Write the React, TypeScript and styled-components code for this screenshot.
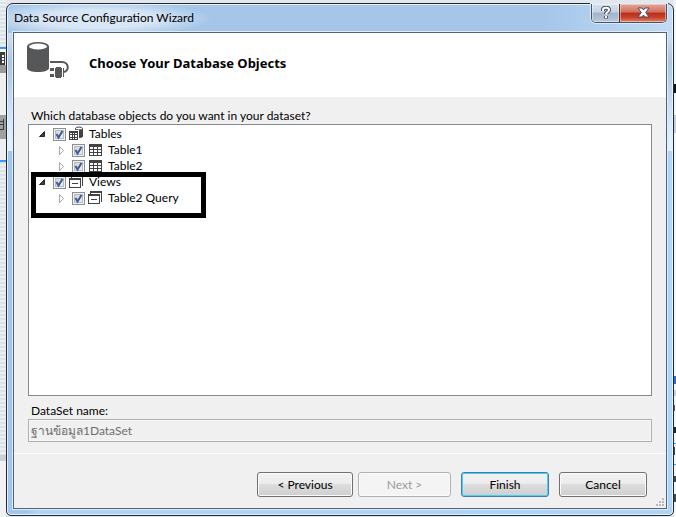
import React from "react";
import styled, { createGlobalStyle, css } from "styled-components";

const Global = createGlobalStyle`
  * { box-sizing: border-box; }
  body { margin: 0; font-family: Lato, "Open Sans", "Liberation Sans", sans-serif; font-size: 12px; line-height: 16px; color: #000; }
  button, input { font: inherit; margin: 0; }
  h1, h2, ul { margin: 0; padding: 0; }
  ul { list-style: none; }
`;

const Desktop = styled.div`
  min-height: 100vh;
  display: grid;
  grid-template-columns: 6px minmax(0, 1fr) 2px;
  grid-template-rows: 3px 1fr 1px;
  background: #e3e7ec;
`;

const LeftSliver = styled.div`
  grid-row: 1 / -1;
  background:
    linear-gradient(#3399ff, #3399ff) 0 47px / 6px 2px no-repeat,
    linear-gradient(#fff, #fff) 0 49px / 6px 3px no-repeat,
    linear-gradient(#fff, #fff) 2px 55px / 2px 2px no-repeat,
    linear-gradient(#fff, #fff) 2px 58px / 2px 2px no-repeat,
    linear-gradient(#fff, #fff) 2px 61px / 2px 2px no-repeat,
    linear-gradient(#3c3c3c, #3c3c3c) 0 52px / 5px 13px no-repeat,
    linear-gradient(#999, #999) 0 65px / 6px 8px no-repeat,
    linear-gradient(#efefef, #efefef) 0 73px / 6px 42px no-repeat,
    linear-gradient(#3c3c3c, #3c3c3c) 0 121px / 3px 1px no-repeat,
    linear-gradient(#3c3c3c, #3c3c3c) 0 124px / 4px 1px no-repeat,
    linear-gradient(#3c3c3c, #3c3c3c) 0 129px / 4px 1px no-repeat,
    linear-gradient(#3c3c3c, #3c3c3c) 3px 119px / 1px 11px no-repeat,
    linear-gradient(#a0a0a0, #a0a0a0) 0 115px / 6px 24px no-repeat,
    linear-gradient(#efefef, #efefef) 0 139px / 6px 21px no-repeat,
    linear-gradient(#3399ff, #3399ff) 0 160px / 6px 2px no-repeat,
    linear-gradient(#ccccdb, #ccccdb) 0 455px / 6px 6px no-repeat,
    linear-gradient(#f2f2f4, #f2f2f4) 0 461px / 6px 60px no-repeat,
    repeating-linear-gradient(#e9eef0 0 2px, #dbe1e4 2px 4px);
`;

const RightSliver = styled.div`
  grid-column: 3;
  grid-row: 1 / -1;
  background:
    linear-gradient(#111, #111) 0 84px / 2px 9px no-repeat,
    linear-gradient(#ccccdb, #ccccdb) 0 115px / 2px 18px no-repeat,
    linear-gradient(#2a6fd6, #2a6fd6) 0 376px / 2px 8px no-repeat,
    linear-gradient(#ccccdb, #ccccdb) 0 390px / 2px 6px no-repeat,
    linear-gradient(#7b5230, #7b5230) 0 405px / 1px 6px no-repeat,
    linear-gradient(#222, #222) 0 427px / 2px 6px no-repeat,
    linear-gradient(#3399ff, #3399ff) 0 443px / 2px 1px no-repeat,
    linear-gradient(#444, #444) 0 447px / 1px 8px no-repeat,
    linear-gradient(#3399ff, #3399ff) 0 464px / 2px 1px no-repeat,
    linear-gradient(#444, #444) 0 476px / 2px 6px no-repeat,
    linear-gradient(#444, #444) 0 494px / 2px 8px no-repeat,
    #f7f7fa;
`;

const Dialog = styled.main`
  grid-column: 2;
  grid-row: 2;
  display: flex;
  flex-direction: column;
  padding: 0 6px 6px;
  border: 1px solid #1f2a38;
  border-radius: 7px 7px 5px 5px;
  box-shadow: inset 0 0 0 1px #e6f2fd;
  background:
    radial-gradient(ellipse 115px 18px at 90px 15px, #d8e6f5 0 50%, transparent) 0 0 / 100% 29px no-repeat,
    linear-gradient(90deg, #a5c6e9 0 80%, #c3daf2) 0 0 / 100% 29px no-repeat,
    linear-gradient(#cfe0f2, #aec5de 30px, #d6e8fa 90px, #e4f2ff 118px) 0 29px / 100% 118px no-repeat,
    linear-gradient(90deg, #a3c6ec 0 20px, #b0d3f8 30px);
`;

const TitleBar = styled.header`
  display: flex;
  align-items: flex-start;
  justify-content: space-between;
  height: 28px;
`;

const Title = styled.h1`
  padding: 5px 1px 0;
  font-size: 12px;
  line-height: 18px;
  font-weight: 400;
`;

const Caption = styled.div`
  display: flex;
  border: 1px solid #465365;
  border-top: 0;
  border-radius: 0 0 5px 5px;
  overflow: hidden;
  box-shadow: 0 0 0 1px #dcebf9;
`;

const CaptionButton = styled.button<{ $close?: boolean }>`
  display: grid;
  place-items: center;
  height: 18px;
  padding: 0;
  border: 0;
  box-shadow: inset 0 0 0 1px #ffffff70;
  ${({ $close }) =>
    $close
      ? css`width: 47px; border-left: 1px solid #5b2020; background: linear-gradient(#e5a599, #d0705e 45%, #b52f1c 50%, #c8432c 75%, #e08469);`
      : css`width: 27px; background: linear-gradient(#d6e1ee, #c5d2e1 45%, #a3b3c7 50%, #b7c9dd);`}
`;

const Client = styled.div`
  flex: 1;
  display: flex;
  flex-direction: column;
  border: 1px solid #4f6276;
  box-shadow: 0 0 0 1px #dcecfb;
  background: #f0f0f0;
`;

const Banner = styled.div`
  display: flex;
  align-items: center;
  gap: 19px;
  height: 64px;
  padding: 0 12px;
  background: #fff;
`;

const Heading = styled.h2`
  padding-bottom: 4px;
  font-family: "Noto Sans", "Open Sans", sans-serif;
  font-size: 13px;
  line-height: 18px;
  font-weight: 700;
`;

const Body = styled.section`
  flex: 1;
  display: flex;
  flex-direction: column;
  padding: 10px 14px 11px;
`;

const FieldLabel = styled.label`
  padding: 0 3px;
  line-height: 17px;
`;

const TreeBox = styled.div`
  position: relative;
  flex: 1;
  margin-bottom: 6px;
  padding-top: 1px;
  border: 1px solid #828790;
  background: #fff;
`;

const Row = styled.div<{ $level: number }>`
  display: flex;
  align-items: center;
  height: 16px;
  padding-left: ${({ $level }) => 5 + $level * 19}px;
`;

const Expander = styled.button`
  display: grid;
  width: 16px;
  height: 16px;
  padding: 0;
  margin-right: 3px;
  border: 0;
  background: none;
`;

const NodeLabel = styled.label`
  display: flex;
  align-items: center;
  height: 16px;
`;

const CheckWrap = styled.span`
  display: grid;
  margin-right: 3px;
  > * { grid-area: 1 / 1; }
  svg { pointer-events: none; }
`;

const Check = styled.input`
  appearance: none;
  width: 13px;
  height: 13px;
  border: 1px solid #8e8f8f;
  box-shadow: inset 0 0 0 1px #f4f4f4, inset 0 0 0 2px #b4bac2;
  background: linear-gradient(135deg, #cbcfd5, #f6f6f6);
`;

const NodeText = styled.span`
  margin-left: 4px;
`;

const Highlight = styled.div`
  position: absolute;
  left: 2px;
  top: 47px;
  width: 175px;
  height: 46px;
  border: 5px solid #000;
  pointer-events: none;
`;

const NameInput = styled.input`
  width: 100%;
  height: 23px;
  padding: 0 2px;
  border: 1px solid #afafaf;
  box-shadow: inset 0 0 0 1px #f8f8f8;
  background: #f0f0f0;
  color: #6d6d6d;
`;

const Footer = styled.footer`
  position: relative;
  display: flex;
  justify-content: flex-end;
  height: 55px;
  padding: 18px 19px 0;
  border-top: 1px solid #fff;
`;

const PushButton = styled.button<{ $primary?: boolean; $wide?: boolean }>`
  width: ${({ $wide }) => ($wide ? 96 : 88)}px;
  height: 25px;
  margin-left: 10px;
  padding: 0;
  border: 1px solid ${({ $primary }) => ($primary ? "#3c7fb1" : "#707070")};
  border-radius: 3px;
  box-shadow: inset 0 0 0 1px ${({ $primary }) => ($primary ? "#48d1f5" : "#fbfbfb")};
  background: linear-gradient(#f2f2f2, #ebebeb 50%, #dddddd 50%, #cfcfcf);
  color: #000;
  &:disabled {
    width: 93px;
    margin-left: 5px;
    border-color: #adb2b5;
    background: #f4f4f4;
    color: #9b9b9b;
  }
`;

const Grip = styled.svg`
  position: absolute;
  right: 2px;
  bottom: 2px;
`;

const DatabaseIcon = () => (
  <svg width="44" height="46" viewBox="0 0 44 46" aria-hidden="true">
    <path d="M1 4v22c0 2.500 5 4 11 4s11-1.500 11-4V4z" fill="#555759" />
    <ellipse cx="12" cy="4.500" rx="11" ry="4.500" fill="#555759" />
    <ellipse cx="12" cy="4.500" rx="9" ry="3" fill="#fff" />
    <path d="M24 20h12c7 0 8 10 1 10" fill="none" stroke="#555759" strokeWidth="2" />
    <path d="M24 26h4v3h-4zM24 32h4v3h-4zM29 26h1v-1h5v1h1v9h-1v1h-5v-1h-1zM37 26h1v9h-1z" fill="#555759" />
  </svg>
);

const TableIcon = () => (
  <svg width="16" height="16" viewBox="0 0 16 16" aria-hidden="true" shapeRendering="crispEdges">
    <path fill="#424242" d="M1 2h13v12H1z" />
    <path fill="#fff" d="M2 5h3v2H2zM6 5h3v2H6zM10 5h3v2h-3zM2 8h3v2H2zM6 8h3v2H6zM10 8h3v2h-3zM2 11h3v2H2zM6 11h3v2H6zM10 11h3v2h-3z" />
  </svg>
);

const TablesIcon = () => (
  <svg width="16" height="16" viewBox="0 0 16 16" aria-hidden="true">
    <path d="M6 2v8c0 2 8 2 8 0V2z" fill="#424242" />
    <ellipse cx="10" cy="2.500" rx="3.500" ry="1.500" fill="#fff" stroke="#424242" />
    <path d="M-1 4h11v11H-1z" fill="#fff" />
    <path d="M0 5h9v9H0z" fill="#424242" />
    <path d="M10 5h4v5c0 1-2 2-4 2z" fill="#424242" />
    <path shapeRendering="crispEdges" fill="#fff" d="M1 7h2v1H1zM4 7h1v1H4zM6 7h2v1H6zM1 9h2v2H1zM4 9h1v2H4zM6 9h2v2H6zM1 12h2v1H1zM4 12h1v1H4zM6 12h2v1H6z" />
  </svg>
);

const ViewIcon = () => (
  <svg width="16" height="16" viewBox="0 0 16 16" aria-hidden="true" shapeRendering="crispEdges">
    <path fill="#424242" d="M2 1h12v11h-1V3H3v1H2z" />
    <path fill="#424242" d="M0 4h12v10H0z" />
    <path fill="#fff" d="M1 6h10v7H1z" />
    <path fill="#424242" d="M3 9h6v1H3z" />
  </svg>
);

const icons = { tables: TablesIcon, table: TableIcon, view: ViewIcon };

type Node = { name: string; icon: keyof typeof icons; children?: Node[] };

const nodes: Node[] = [
  { name: "Tables", icon: "tables", children: [{ name: "Table1", icon: "table" }, { name: "Table2", icon: "table" }] },
  { name: "Views", icon: "view", children: [{ name: "Table2 Query", icon: "view" }] },
];

const TreeItem = ({ node, level }: { node: Node; level: number }) => {
  const Icon = icons[node.icon];
  const open = Boolean(node.children);
  return (
    <li>
      <Row $level={level}>
        <Expander type="button" aria-label={node.name} aria-expanded={open}>
          <svg width="16" height="16" viewBox="0 0 16 16" aria-hidden="true">
            {open ? (
              <path d="M10.500 5.500v5h-5z" fill="#404040" stroke="#262626" />
            ) : (
              <path d="M6.500 4.500v8l4-4z" fill="#fff" stroke="#a6a6a6" />
            )}
          </svg>
        </Expander>
        <NodeLabel>
          <CheckWrap>
            <Check type="checkbox" defaultChecked />
            <svg width="13" height="13" viewBox="0 0 13 13" aria-hidden="true">
              <path d="M3.500 6l2 3.500L9.500 3" fill="none" stroke="#3d5a9c" strokeWidth="2" />
            </svg>
          </CheckWrap>
          <Icon />
          <NodeText>{node.name}</NodeText>
        </NodeLabel>
      </Row>
      {node.children && (
        <ul>
          {node.children.map((child) => (
            <TreeItem key={child.name} node={child} level={level + 1} />
          ))}
        </ul>
      )}
    </li>
  );
};

export default function App() {
  return (
    <Desktop>
      <Global />
      <LeftSliver />
      <Dialog>
        <TitleBar>
          <Title>Data Source Configuration Wizard</Title>
          <Caption>
            <CaptionButton type="button" aria-label="Help">
              <svg width="12" height="14" viewBox="0 0 12 14" aria-hidden="true">
                <path d="M3 5V4c0-3 6-3 6 0 0 2-3 2-3 4M6 10v2.500" fill="none" stroke="#465060" strokeWidth="4" />
                <path d="M3 5V4c0-3 6-3 6 0 0 2-3 2-3 4.500M6 10v2" fill="none" stroke="#fff" strokeWidth="2" />
              </svg>
            </CaptionButton>
            <CaptionButton type="button" aria-label="Close" $close>
              <svg width="13" height="12" viewBox="0 0 13 12" aria-hidden="true">
                <path d="M1 1h4l1.500 2L8 1h4L8.700 5.500 12 10H8L6.500 8 5 10H1l3.300-4.500z" fill="#fff" stroke="#4b4b60" />
              </svg>
            </CaptionButton>
          </Caption>
        </TitleBar>
        <Client>
          <Banner>
            <DatabaseIcon />
            <Heading>Choose Your Database Objects</Heading>
          </Banner>
          <Body>
            <FieldLabel as="div" id="objects-label">Which database objects do you want in your dataset?</FieldLabel>
            <TreeBox role="group" aria-labelledby="objects-label">
              <ul>
                {nodes.map((node) => (
                  <TreeItem key={node.name} node={node} level={0} />
                ))}
              </ul>
              <Highlight />
            </TreeBox>
            <FieldLabel htmlFor="dataset-name">DataSet name:</FieldLabel>
            <NameInput id="dataset-name" type="text" defaultValue="ฐานข้อมูล1DataSet" disabled />
          </Body>
          <Footer>
            <PushButton type="button" $wide>&lt; Previous</PushButton>
            <PushButton type="button" disabled>Next &gt;</PushButton>
            <PushButton type="submit" $primary>Finish</PushButton>
            <PushButton type="button">Cancel</PushButton>
            <Grip width="8" height="8" viewBox="0 0 8 8" aria-hidden="true">
              <path fill="#b8b8b8" d="M6 0h2v2H6zM3 3h2v2H3zM6 3h2v2H6zM0 6h2v2H0zM3 6h2v2H3zM6 6h2v2H6z" />
            </Grip>
          </Footer>
        </Client>
      </Dialog>
      <RightSliver />
    </Desktop>
  );
}
